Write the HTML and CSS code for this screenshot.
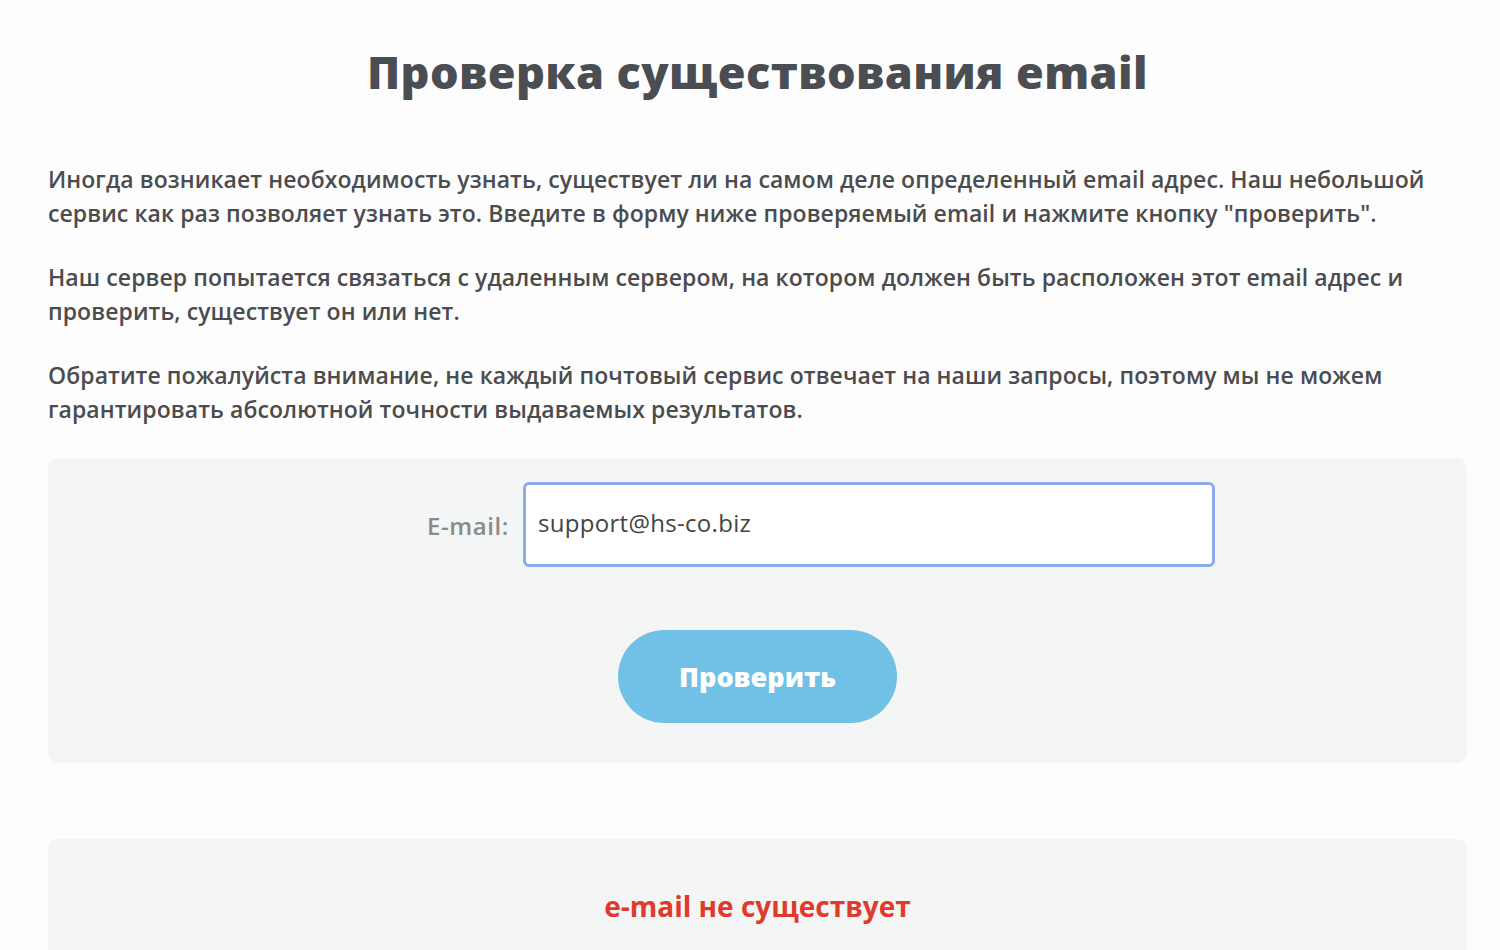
FILE: index.html
```html
<!DOCTYPE html>
<html lang="ru">
<head>
	<meta charset="UTF-8">
	<title>Проверка существования email</title>
	<link rel="stylesheet" href="styles.css">
</head>
<body>

<div class="page">
	<h1 class="title">Проверка существования email</h1>

	<p class="text">Иногда возникает необходимость узнать, существует ли на самом деле определенный email адрес. Наш небольшой сервис как раз позволяет узнать это. Введите в форму ниже проверяемый email и нажмите кнопку "проверить".</p>
	<p class="text">Наш сервер попытается связаться с удаленным сервером, на котором должен быть расположен этот email адрес и проверить, существует он или нет.</p>
	<p class="text">Обратите пожалуйста внимание, не каждый почтовый сервис отвечает на наши запросы, поэтому мы не можем гарантировать абсолютной точности выдаваемых результатов.</p>

	<form class="check-form" onsubmit="return false">
		<div class="field">
			<label for="email" class="field-label">E-mail:</label>
			<input type="text" id="email" class="field-input" value="support@hs-co.biz">
		</div>
		<div class="actions">
			<button type="submit" class="btn">Проверить</button>
		</div>
	</form>

	<div class="result">
		<span class="result-text">e-mail не существует</span>
	</div>
</div>

</body>
</html>
```

FILE: styles.css
```css
* {
	margin: 0;
	padding: 0;
	box-sizing: border-box;
}
body {
	background: #fdfdfd;
	font-family: "Open Sans", "Noto Sans", sans-serif;
	color: #4a4b4d;
}
.page {
	padding: 44px 33px 0 48px;
}
.title {
	text-align: center;
	font-size: 45px;
	font-weight: 800;
	letter-spacing: 0.4px;
	color: #4a4d52;
	line-height: 56px;
	margin-bottom: 62px;
}
.text {
	max-width: 1392px;
	font-size: 23px;
	line-height: 34px;
	font-weight: 600;
	letter-spacing: 0.08px;
	color: #4b4c4e;
	margin-bottom: 30px;
}
.check-form {
	background: #f4f5f5;
	border-radius: 10px;
	margin-top: 32px;
	padding: 24px 0 40px;
}
.field {
	display: flex;
	align-items: center;
	padding-left: 340px;
}
.field-label {
	width: 135px;
	text-align: right;
	padding-right: 14px;
	font-size: 24px;
	font-weight: 600;
	letter-spacing: 0.6px;
	color: #8a8b8c;
	padding-top: 2px;
}
.field-input {
	width: 692px;
	height: 85px;
	border: 3px solid #8caaee;
	border-radius: 6px;
	background: #fff;
	padding: 0 12px 4px;
	font-family: "Open Sans", "Noto Sans", sans-serif;
	font-size: 24px;
	letter-spacing: 0.3px;
	color: #444;
	outline: none;
}
.actions {
	display: flex;
	justify-content: center;
	margin-top: 63px;
}
.btn {
	width: 279px;
	height: 93px;
	border: none;
	border-radius: 47px;
	background: #71c1e6;
	color: #fff;
	font-family: "Open Sans", "Noto Sans", sans-serif;
	font-size: 27px;
	font-weight: 800;
	cursor: pointer;
}
.result {
	background: #f4f5f5;
	border-radius: 10px;
	margin-top: 76px;
	height: 160px;
	padding-top: 48px;
	text-align: center;
}
.result-text {
	font-size: 28px;
	font-weight: 700;
	color: #e03a2d;
}
```
